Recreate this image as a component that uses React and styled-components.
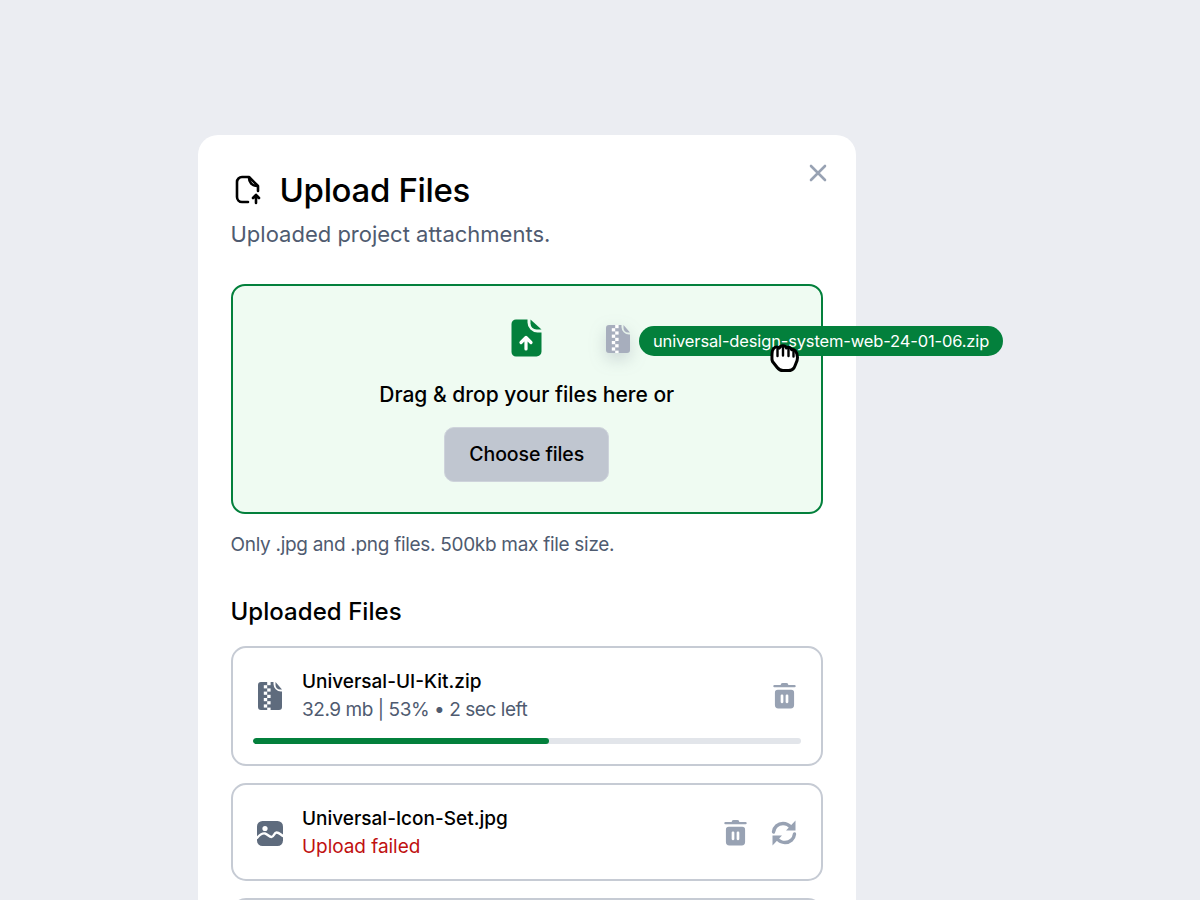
import React from "react";
import styled, { createGlobalStyle } from "styled-components";

const Global = createGlobalStyle`
  html, body { margin: 0; padding: 0; height: 900px; overflow: hidden; background: #ebedf2; }
  body { font-family: Inter, "Noto Sans", "Liberation Sans", sans-serif; color: #000; }
`;
const Page = styled.div`height: 900px; overflow: hidden; padding: 135px 0 0 198px; box-sizing: border-box;`;
const Card = styled.div`position: relative; width: 658px; height: 900px; box-sizing: border-box; background: #fff; border-radius: 20px; padding: 33px 33px 0 32.5px;`;
const Close = styled.button`position: absolute; top: 26px; right: 26.500px; width: 24px; height: 24px; border: 0; padding: 0; background: none; color: #98a2b3; display: flex;`;
const TitleRow = styled.div`display: flex; align-items: center; gap: 18px; height: 44px; padding-left: 1px;`;
const Title = styled.h1`margin: 0; font-size: 33px; line-height: 44px; font-weight: 500; letter-spacing: -0.35px;`;
const Sub = styled.p`margin: 7px 0 0; font-size: 22px; line-height: 30px; color: #4f5b70;`;
const Drop = styled.div`margin-top: 34.500px; height: 230px; box-sizing: border-box; border: 2px solid #03803c; border-radius: 14px; background: #effbf2; display: flex; flex-direction: column; align-items: center; padding-top: 33px;`;
const DropText = styled.div`margin-top: 22px; font-size: 21px; line-height: 32px; font-weight: 500;`;
const Choose = styled.button`margin-top: 16px; width: 165px; height: 55px; border: 1px solid #ced3db; border-radius: 10px; background: #c0c6d0; font: 500 19.500px Inter, sans-serif; color: #000; letter-spacing: -0.1px;`;
const Hint = styled.p`margin: 16.500px 0 0; font-size: 19px; line-height: 30px; color: #4f5b70; letter-spacing: -0.3px;`;
const Section = styled.h2`margin: 35px 0 0; font-size: 24px; line-height: 34px; font-weight: 500; letter-spacing: 0.05px;`;
const List = styled.div`margin-top: 17px; display: flex; flex-direction: column; gap: 17px;`;
const Row = styled.div`box-sizing: border-box; border: 2px solid #c6cbd4; border-radius: 15px; padding: 20px 20px 20px; height: ${p => p.$h}px;`;
const RowMain = styled.div`display: flex; align-items: center;`;
const FileIcon = styled.div`width: 32px; height: 40px; display: flex; align-items: center; justify-content: center; margin-right: 17.500px; transform: translateX(1px);`;
const Info = styled.div`flex: 1;`;
const Name = styled.div`font-size: 19px; line-height: 28px; font-weight: 500;`;
const Meta = styled.div`font-size: 19px; line-height: 28px; color: ${p => p.$error ? "#c01010" : "#4f5b70"}; letter-spacing: ${p => p.$error ? "-0.05px" : "-0.45px"};`;
const Actions = styled.div`display: flex; gap: 23px; align-items: center; color: #98a2b3; margin-right: 4px;`;
const Slot = styled.div`width: 26px; display: flex; justify-content: center;`;
const Track = styled.div`margin-top: 14px; height: 6px; border-radius: 3px; background: #e2e5ea; overflow: hidden;`;
const Fill = styled.div`height: 100%; background: #03803c; border-radius: 3px;`;
const Ghost = styled.div`position: absolute; left: 408px; top: 189px; width: 24px; height: 30px; filter: drop-shadow(0 6px 8px rgba(100,110,130,.25));`;
const Pill = styled.div`position: absolute; left: 441px; top: 191px; height: 30px; padding: 0 14px; border-radius: 15px; background: #03803c; color: #fff; font-size: 16.500px; line-height: 30px; white-space: nowrap; box-sizing: border-box; width: 364px; letter-spacing: -0.15px;`;
const Cursor = styled.div`position: absolute; left: 571px; top: 209px; width: 32px; height: 30px;`;

const TitleIcon = () => (
  <svg width="30" height="30" viewBox="0 0 30 30" fill="none" stroke="#000" strokeWidth="2.600" strokeLinecap="round" strokeLinejoin="round">
    <path d="M16 27H10a5 5 0 0 1-5-5V7a5 5 0 0 1 5-5h7l9 9v5" />
    <path d="M17 2.500c0 5 3 8.500 8.500 8.500" />
    <path d="M24 28v-8M21 23l3-3.200 3 3.200" />
  </svg>
);
const UploadIcon = () => (
  <svg width="31" height="38" viewBox="0 0 31 38">
    <path fill="#03803c" d="M5 0.500h11.500v3a10 10 0 0 0 10 10h4v19a5 5 0 0 1-5 5H5a4.500 4.500 0 0 1-4.500-4.500V5A4.500 4.500 0 0 1 5 0.500z" />
    <path fill="#03803c" d="M19.500 0.500 L30.500 10.500 H25.500a6 6 0 0 1-6-6z" />
    <path fill="none" stroke="#fff" strokeWidth="3.200" strokeLinecap="round" strokeLinejoin="round" d="M15 30V19M10 23.500l5-5 5 5" />
  </svg>
);
const ZipIcon = ({ c, w = 24, h = 30 }) => (
  <svg width={w} height={h} viewBox="0 0 24 30">
    <path fill={c} d="M3 1h12.500v2a7.500 7.500 0 0 0 7.500 7.500h1V26a3 3 0 0 1-3 3H3a3 3 0 0 1-3-3V4a3 3 0 0 1 3-3z" />
    <path fill={c} d="M17.500 1 L24 8.500h-2a4.500 4.500 0 0 1-4.500-4.500z" />
    <g fill="#fff">
      <rect x="9.200" y="1" width="3.400" height="3.200" /><rect x="5.800" y="4.200" width="3.400" height="3.200" /><rect x="9.200" y="7.400" width="3.400" height="3.200" />
      <rect x="5.800" y="10.600" width="3.400" height="3.200" /><rect x="9.200" y="13.800" width="3.400" height="3.200" /><rect x="5.800" y="17" width="3.400" height="3.200" />
      <rect x="9.200" y="20.200" width="3.400" height="3.200" /><rect x="5.800" y="23.400" width="3.400" height="3.200" /><rect x="9.200" y="26.600" width="3.400" height="2.400" />
    </g>
  </svg>
);
const ImageIcon = () => (
  <svg width="26" height="25" viewBox="0 0 26 25">
    <rect width="26" height="25" rx="5.500" fill="#5e6b7d" />
    <circle cx="8" cy="7.500" r="2.600" fill="#fff" />
    <path fill="none" stroke="#fff" strokeWidth="2.400" strokeLinecap="round" d="M0 17c3-3.500 5.500-5 8-4.500s4 3.500 6.500 3.500 2.500-4.500 5-4.500 3.500 1.500 6.500 3.500" />
  </svg>
);
const Trash = () => (
  <svg width="23" height="28" viewBox="0 0 24 29">
    <path fill="currentColor" d="M8 3a2 2 0 0 1 2-2h4a2 2 0 0 1 2 2h6.500a1 1 0 0 1 0 2.400H1.500a1 1 0 0 1 0-2.400z" />
    <path fill="currentColor" d="M5 8h14a3 3 0 0 1 3 3v13a3.500 3.500 0 0 1-3.500 3.500h-13A3.500 3.500 0 0 1 2 24V11a3 3 0 0 1 3-3z" />
    <rect x="8" y="13" width="2.800" height="9" rx="1.200" fill="#fff" />
    <rect x="13.200" y="13" width="2.800" height="9" rx="1.200" fill="#fff" />
  </svg>
);
const Refresh = () => (
  <svg width="26" height="28" viewBox="0 0 26 28" fill="none">
    <path stroke="currentColor" strokeWidth="3.400" strokeLinecap="round" d="M2.500 13c.500-5 4.500-8.500 9.500-8.500 3.500 0 6 1.500 8 4M23.500 15c-.500 5-4.500 8.500-9.500 8.500-3.500 0-6-1.500-8-4" />
    <path fill="currentColor" d="M24.500 1.500v10h-9.500zM1.500 26.500v-10H11z" />
  </svg>
);
const Hand = () => (
  <svg width="32" height="30" viewBox="0 0 32 30">
    <path fill="#fff" stroke="#000" strokeWidth="3" strokeLinejoin="round" d="M3 10c0-4 2-7 4.500-7 1.200 0 2 .4 2.700 1.200C11 2.500 12.500 1.800 14 1.800s2.800.7 3.500 2.200c1-.8 2.300-.9 3.400-.3 1 .5 1.500 1.300 1.800 2.100 1.200-.4 2.500-.2 3.500.9 1.300 1.400 2.300 4 2.300 6.800 0 2.700-.7 4.500-1.700 6.300-.6 1.400-.9 2.700-1.800 4-1.200 1.700-3 2.700-5.500 2.700h-5.500c-2.500 0-4.300-1-5.800-3L3.500 17.500C2.500 15.500 3 12 3 10z" />
    <path stroke="#000" strokeWidth="2.400" strokeLinecap="round" d="M8.500 5v7M14 4v7.500M19.500 5v7M24.500 7v5.500" />
  </svg>
);

export default function App() {
  return (
    <>
      <Global />
      <Page>
        <Card>
          <Close aria-label="Close">
            <svg width="24" height="24" viewBox="0 0 24 24" fill="none" stroke="currentColor" strokeWidth="2.600" strokeLinecap="round">
              <path d="M5 5l14 14M19 5L5 19" />
            </svg>
          </Close>
          <TitleRow>
            <TitleIcon />
            <Title>Upload Files</Title>
          </TitleRow>
          <Sub>Uploaded project attachments.</Sub>
          <Drop>
            <UploadIcon />
            <DropText>Drag &amp; drop your files here or</DropText>
            <Choose>Choose files</Choose>
          </Drop>
          <Hint>Only .jpg and .png files. 500kb max file size.</Hint>
          <Section>Uploaded Files</Section>
          <List>
            <Row $h={120}>
              <RowMain>
                <FileIcon><ZipIcon c="#5e6b7d" /></FileIcon>
                <Info>
                  <Name>Universal-UI-Kit.zip</Name>
                  <Meta>32.9 mb | 53% • 2 sec left</Meta>
                </Info>
                <Actions><Slot><Trash /></Slot></Actions>
              </RowMain>
              <Track><Fill style={{ width: "54%" }} /></Track>
            </Row>
            <Row $h={98}>
              <RowMain>
                <FileIcon><ImageIcon /></FileIcon>
                <Info>
                  <Name>Universal-Icon-Set.jpg</Name>
                  <Meta $error>Upload failed</Meta>
                </Info>
                <Actions><Slot><Trash /></Slot><Slot><Refresh /></Slot></Actions>
              </RowMain>
            </Row>
            <Row $h={98} />
          </List>
          <Ghost><ZipIcon c="#a7aebd" /></Ghost>
          <Pill>universal-design-system-web-24-01-06.zip</Pill>
          <Cursor><Hand /></Cursor>
        </Card>
      </Page>
    </>
  );
}
